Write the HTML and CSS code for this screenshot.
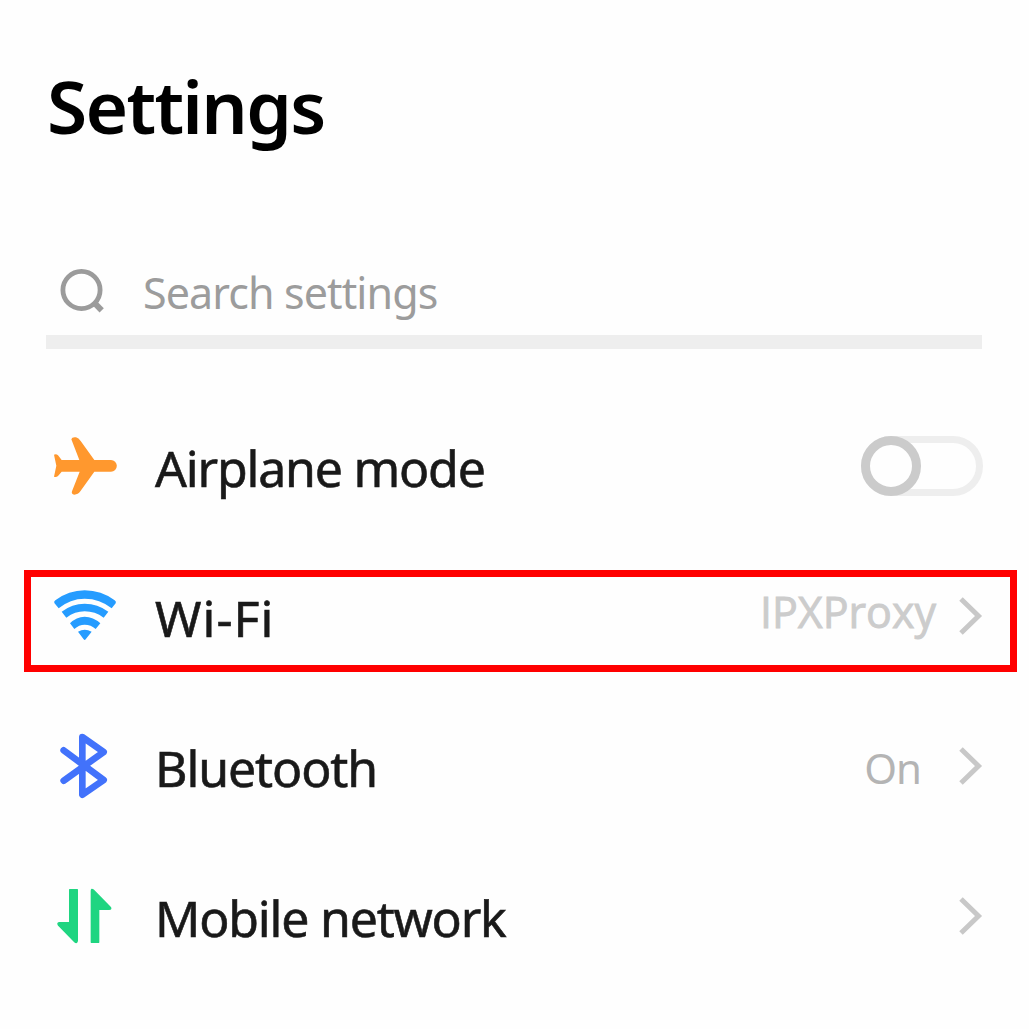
FILE: index.html
```html
<!DOCTYPE html>
<html lang="en">
<head>
<meta charset="utf-8">
<title>Settings</title>
<link rel="stylesheet" href="styles.css">
</head>
<body>
<main class="screen">
  <h1 class="title">Settings</h1>
  <div class="search">
    <svg class="search-icon" width="46" height="46" viewBox="0 0 46 46"><circle cx="21.5" cy="22" r="18.6"/><path d="M34 34.5L41.7 42.3" stroke-width="6"/></svg>
    <span class="search-text">Search settings</span>
  </div>
  <ul class="list">
    <li class="row">
      <svg class="icon" width="90" height="90" viewBox="0 0 270 270"><path fill="#ff982e" d="M94 58Q96 50 108 52Q116 54 122 63L163 120H213A17 17 0 0 1 213 155H163L121 214Q114 224 103 224Q93 223 96 214L119 155H65L54 168Q49 172 42 170L49 137L42 104Q49 101 54 106L65 120H118Z"/></svg>
      <span class="label airplane">Airplane mode</span>
      <span class="toggle"><span class="knob"></span></span>
    </li>
    <li class="row highlighted">
      <svg class="icon" width="90" height="90" viewBox="0 0 270 270"><g fill="#259cff" transform="translate(0 -3)"><path d="M43 102Q41 98 46 94Q86 64 134 64Q184 64 224 94Q230 98 227 103L215 118Q180 89 134 89Q90 89 56 118Z"/><path d="M65 128Q96 104 134 104Q173 104 205 128L191 146Q165 127 134 127Q105 127 79 146Z"/><path d="M90 163Q109 143 134 143Q160 143 181 163L167 180Q153 167 134 167Q117 167 103 180Z"/><path d="M114 188Q134 176 155 188L137 211Q134 215 131 211Z"/></g></svg>
      <span class="label wifi">Wi-Fi</span>
      <span class="value network">IPXProxy</span>
      <svg class="chevron" width="24" height="38" viewBox="0 0 24 38"><path d="M2 2L19.5 19L2 36"/></svg>
    </li>
    <li class="row">
      <svg class="icon" width="90" height="90" viewBox="0 0 270 270"><path fill="none" stroke="#4272fb" stroke-width="20" stroke-linejoin="round" stroke-linecap="round" d="M71 91L191 180L127 224V51L191 96L71 182"/></svg>
      <span class="label bluetooth">Bluetooth</span>
      <span class="value on">On</span>
      <svg class="chevron" width="24" height="38" viewBox="0 0 24 38"><path d="M2 2L19.5 19L2 36"/></svg>
    </li>
    <li class="row">
      <svg class="icon" width="90" height="90" viewBox="0 0 270 270"><path fill="#1fd581" stroke="#1fd581" stroke-width="4" stroke-linejoin="round" d="M89 59H112V212Q111 221 104 215L55 165Q51 159 59 158H89ZM154 217V62Q154 55 160 60L210 111Q216 118 207 118H176V217Z"/></svg>
      <span class="label mobile">Mobile network</span>
      <svg class="chevron" width="24" height="38" viewBox="0 0 24 38"><path d="M2 2L19.5 19L2 36"/></svg>
    </li>
  </ul>
</main>
</body>
</html>
```
FILE: styles.css
```css
*, *::after { box-sizing: border-box; }
body { margin: 0; background: #fefefe; font-family: "Noto Sans", sans-serif; color: #191919; }
.screen { width: 1029px; height: 1029px; padding-top: 56px; overflow: hidden; }
.title { margin: 0 0 0 47px; height: 100px; line-height: 100px; font-size: 73px; font-weight: 600; letter-spacing: -1.7px; color: #000; white-space: nowrap; }
.search { display: flex; align-items: flex-start; margin: 93px 47px 0 46px; height: 100px; padding: 19px 0 0 14px; border-bottom: 14px solid #eee; }
.search-icon { flex: none; fill: none; stroke: #9b9b9b; stroke-width: 4.8; }
.search-text { margin: -5px 0 0 37px; font-size: 43px; font-weight: 400; letter-spacing: -0.9px; color: #9c9c9c; line-height: 60px; white-space: nowrap; }
.list { list-style: none; margin: 42px 0 0; padding: 0; }
.row { position: relative; display: flex; align-items: center; height: 150px; padding: 0 46px 0 40px; }
.highlighted::after { content: ""; position: absolute; left: 24px; top: 29px; width: 993px; height: 102px; border: 7px solid #f00; }
.icon { flex: none; margin-top: -2px; }
.label { margin: 0 auto 0 25px; padding-top: 3px; font-size: 50px; font-weight: 400; -webkit-text-stroke: 0.6px; line-height: 70px; white-space: nowrap; }
.airplane { letter-spacing: -1.2px; }
.wifi { letter-spacing: 1px; }
.bluetooth { letter-spacing: -1.1px; }
.mobile { letter-spacing: -1.2px; }
.value { font-size: 43px; line-height: 60px; white-space: nowrap; }
.network { color: #ccc; font-family: "Open Sans", sans-serif; font-weight: 500; -webkit-text-stroke: 0.9px; margin-right: 23px; margin-top: -8px; }
.on { color: #b4b4b4; font-size: 42px; font-weight: 400; margin-right: 38px; padding-top: 3px; letter-spacing: -1px; }
.chevron { flex: none; fill: none; stroke: #c8c8c8; stroke-width: 5; }
.toggle { width: 122px; height: 60px; border: 7px solid #eee; border-radius: 30px; }
.knob { display: block; width: 60px; height: 60px; margin: -7px; border: 9px solid #cbcbcb; border-radius: 50%; background: #fefefe; }
```
